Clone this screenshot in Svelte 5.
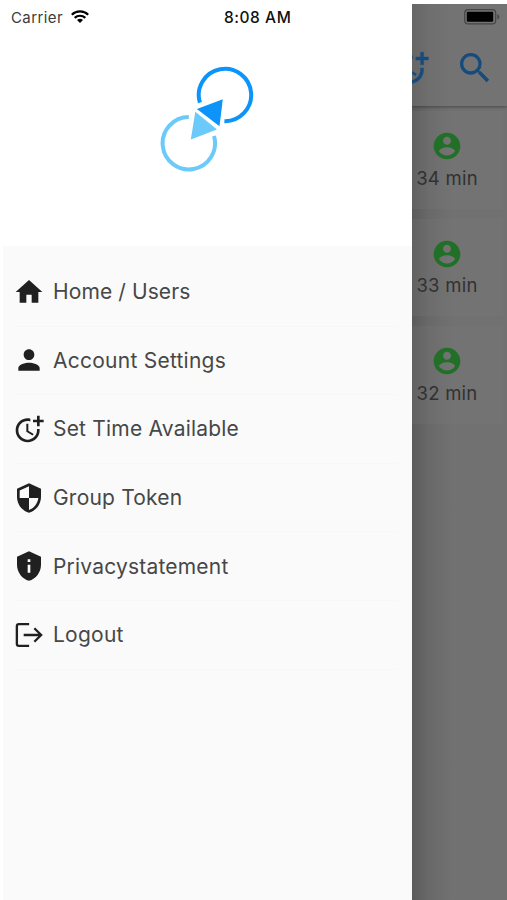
<script>
  const menu = [
    { icon: "home", label: "Home / Users", spacing: 0.1 },
    { icon: "person", label: "Account Settings", spacing: 0.25 },
    { icon: "time", label: "Set Time Available", spacing: 0.2 },
    { icon: "security", label: "Group Token", spacing: 0.2 },
    { icon: "privacy", label: "Privacystatement", spacing: 0.2 },
    { icon: "logout", label: "Logout", spacing: 0.25 }
  ];

  const users = [
    { id: 1, minutes: 34 },
    { id: 2, minutes: 33 },
    { id: 3, minutes: 32 }
  ];

  const paths = {
    home: "M10 20v-6h4v6h5v-8h3L12 3 2 12h3v8z",
    person: "M12 12c2.21 0 4-1.79 4-4s-1.79-4-4-4-4 1.79-4 4 1.79 4 4 4zm0 2c-2.67 0-8 1.34-8 4v2h16v-2c0-2.66-5.33-4-8-4z",
    time: "M10 8v6l4.7 2.9.8-1.2-4-2.4V8zM17.92 12c.05.33.08.66.08 1 0 3.9-3.1 7-7 7s-7-3.1-7-7 3.1-7 7-7c.7 0 1.37.1 2 .29V4.23C12.36 4.08 11.69 4 11 4c-5 0-9 4-9 9s4 9 9 9 9-4 9-9c0-.34-.02-.67-.06-1h-2.02zM20 5V2h-2v3h-3v2h3v3h2V7h3V5z",
    security: "M12 1L3 5v6c0 5.55 3.84 10.74 9 12 5.16-1.26 9-6.45 9-12V5l-9-4zm0 10.99h7c-.53 4.12-3.28 7.79-7 8.94V12H5V6.3l7-3.11v8.8z",
    privacy: "M12 1L3 5v6c0 5.55 3.84 10.74 9 12 5.16-1.26 9-6.45 9-12V5l-9-4zm-1 6h2v2h-2V7zm0 4h2v6h-2v-6z"
  };
</script>

<div class="screen">
  <aside class="drawer">
    <header>
      <div class="status">
        <span class="carrier">Carrier</span>
        <svg class="wifi" viewBox="0 0 18 13" width="18" height="13">
          <g fill="none" stroke="#000" stroke-width="2.2">
            <path d="M.8 4.8a11.7 11.7 0 0 1 16.4 0" />
            <path d="M3.7 7.9a7.6 7.6 0 0 1 10.6 0" />
          </g>
          <path d="M9 13L6 10.1a4.3 4.3 0 0 1 6 0z" />
        </svg>
        <span class="clock">8:08 AM</span>
      </div>

      <svg class="logo" viewBox="0 0 96 108" width="96" height="108">
        <g fill="none" stroke-width="4">
          <path stroke="#0c94fb" d="M39.9 37.6A26.2 26.2 0 1 1 64.4 56.2" />
          <path stroke="#6ccafb" d="M28.8 52A26.2 26.2 0 1 0 54 71" />
        </g>
        <path fill="#0c94fb" d="M36.9 44L62.8 34.2 59.5 61.2z" />
        <path fill="#6ccafb" d="M35.3 46.8L57 64.4 30.8 74.6z" />
      </svg>
    </header>

    <nav>
      {#each menu as item}
        <a href="#{item.icon}">
          <svg viewBox="0 0 24 24" width="32" height="32">
            {#if item.icon === "logout"}
              <g fill="none" stroke="#202020" stroke-width="1.75">
                <path d="M12.1 3.9H4.4Q2.9 3.9 2.9 5.4v13.2q0 1.5 1.5 1.5h7.7" />
                <path d="M8 12h13M16 6.9L21.1 12 16 17.1" />
              </g>
            {:else}
              <path fill="#202020" fill-rule="evenodd" d={paths[item.icon]} />
            {/if}
          </svg>
          <span style="letter-spacing: {item.spacing}px">{item.label}</span>
        </a>
      {/each}
    </nav>
  </aside>

  <main>
    <div class="appbar">
      <svg class="battery" viewBox="0 0 36 16" width="36" height="16">
        <rect x=".7" y=".7" width="31" height="14.2" rx="3.5" fill="none" stroke="#454545" stroke-width="1.2" />
        <rect x="2.8" y="2.8" width="26.4" height="10" rx="1" />
        <path fill="#454545" d="M33.4 5.2q2 .6 2 2.6t-2 2.6z" />
      </svg>
      <div class="actions">
        <svg class="more" viewBox="0 0 24 24" width="38" height="38">
          <path fill="#174b7c" stroke="#174b7c" stroke-width=".2" d={paths.time} />
        </svg>
        <svg viewBox="0 0 24 24" width="40" height="40">
          <path fill="#174b7c" d="M15.5 14h-.79l-.28-.27A6.471 6.471 0 0 0 16 9.5 6.5 6.5 0 1 0 9.5 16c1.61 0 3.09-.59 4.23-1.57l.27.28v.79l5 4.99L20.49 19l-4.99-5zm-6 0C7.01 14 5 11.99 5 9.5S7.01 5 9.5 5 14 7.01 14 9.5 11.99 14 9.5 14z" />
        </svg>
      </div>
    </div>

    <div class="list">
      {#each users as user (user.id)}
        <div class="card">
          <svg viewBox="0 0 24 24" width="32" height="32">
            <path fill="#227028" d="M12 2C6.48 2 2 6.48 2 12s4.48 10 10 10 10-4.48 10-10S17.52 2 12 2zm0 3c1.66 0 3 1.34 3 3s-1.34 3-3 3-3-1.34-3-3 1.34-3 3-3zm0 14.2c-2.5 0-4.71-1.28-6-3.22.03-1.99 4-3.08 6-3.08 1.99 0 5.97 1.09 6 3.08-1.29 1.94-3.5 3.22-6 3.22z" />
          </svg>
          <span>{user.minutes} min</span>
        </div>
      {/each}
    </div>
  </main>
</div>

<style>
  :global(body) {
    background: #fff;
  }

  .screen {
    display: flex;
    height: 900px;
    overflow: hidden;
    font-family: Inter, "Liberation Sans", sans-serif;
  }

  .drawer {
    width: 409px;
    flex: none;
    padding-left: 3px;
    display: flex;
    flex-direction: column;
  }

  header {
    height: 246px;
    flex: none;
  }

  .status {
    display: flex;
    align-items: center;
    height: 35px;
    padding-left: 8px;
  }

  .carrier {
    width: 52px;
    font-size: 15px;
    letter-spacing: 0.4px;
    color: #3c3c3c;
  }

  .wifi {
    margin: -2px 0 0 8px;
  }

  .clock {
    margin-left: 135px;
    font-size: 15.5px;
    font-weight: 500;
    letter-spacing: 0.55px;
    color: #111;
  }

  .logo {
    display: block;
    margin: 30px 0 0 157.3px;
  }

  nav {
    flex: 1;
    background: #fafafa;
    padding: 12px 14px 0 12px;
  }

  nav a {
    display: flex;
    align-items: center;
    height: 67.6px;
    border-bottom: 1px solid #f7f7f7;
    color: #474747;
    font-size: 21px;
    text-decoration: none;
  }

  nav a svg {
    margin: 0 8px 0 -2px;
  }

  main {
    flex: 1;
    margin-top: 4px;
    background: linear-gradient(90deg, rgba(0, 0, 0, 0.2), rgba(0, 0, 0, 0.08) 16px, transparent 40px), #717171;
    overflow: hidden;
  }

  .appbar {
    display: flex;
    flex-direction: column;
    height: 102px;
    background: rgba(120, 120, 120, 0.4);
    box-shadow: 0 1px 3px rgba(0, 0, 0, 0.35);
  }

  .battery {
    margin: 5px 0 0 52px;
  }

  .actions {
    display: flex;
    align-items: center;
    margin: 23px 0 0 -20px;
  }

  .more {
    margin-right: 25px;
  }

  .list {
    padding: 5px 4px 0 0;
  }

  .card {
    box-sizing: border-box;
    display: flex;
    flex-direction: column;
    align-items: center;
    height: 97.7px;
    margin-bottom: 10px;
    padding: 19px 21px 0 0;
    background: rgba(124, 124, 124, 0.2);
    color: #313131;
    font-size: 18.5px;
    letter-spacing: 0.25px;
  }

  .card span {
    margin-top: 4.5px;
    white-space: nowrap;
  }
</style>
